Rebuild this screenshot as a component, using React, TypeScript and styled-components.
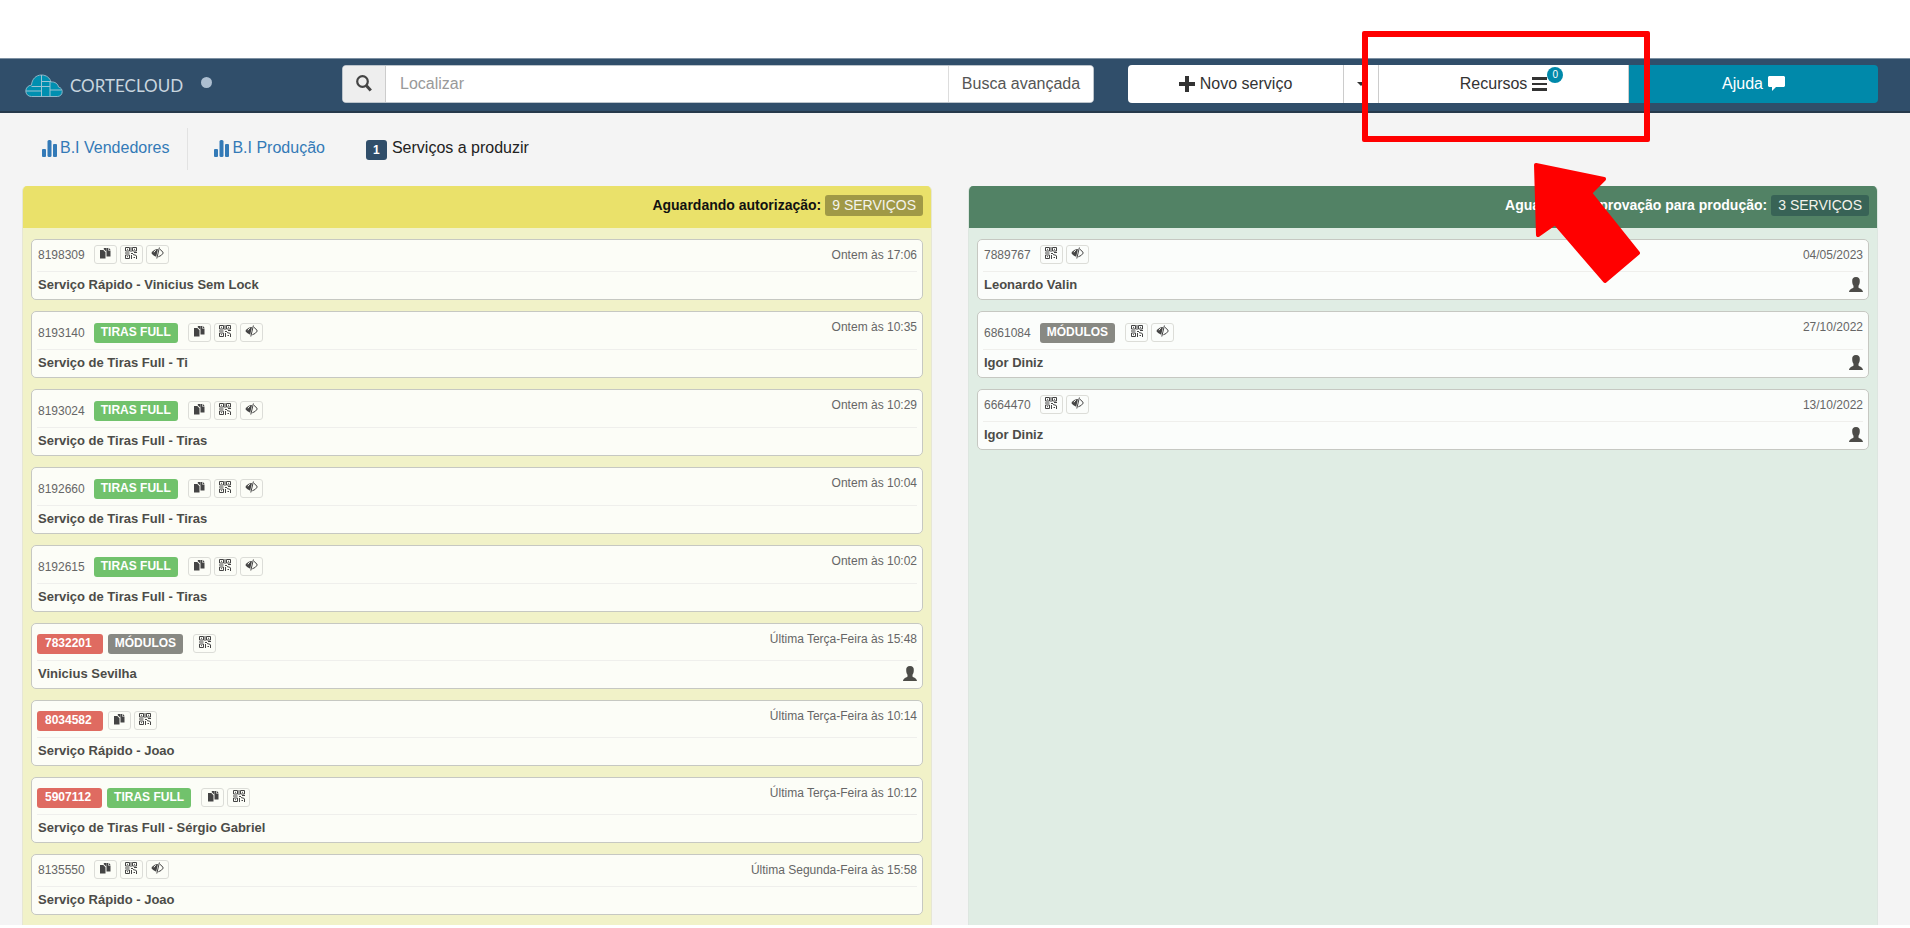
import React from "react";
import styled, { createGlobalStyle } from "styled-components";

const GlobalStyle = createGlobalStyle`
  * { box-sizing: border-box; }
  body { margin: 0; background: #fff; color: #333; font: 16px/22px "Liberation Sans", Arial, sans-serif; }
  button, input { font: inherit; }
  a { text-decoration: none; color: inherit; }
`;

const Page = styled.div`
  padding-top: 58px;
`;

const TopBar = styled.header`
  display: flex;
  align-items: center;
  height: 55px;
  padding: 0 32px 2px 25px;
  background: #304e6a;
  border-top: 1px solid #7d90a2;
  border-bottom: 2px solid #26394b;
`;

const Brand = styled.a`
  display: flex;
  align-items: center;
  gap: 7px;
  width: 317px;
  flex: none;
  padding-top: 3px;
  color: #c9d5df;
`;

const BrandName = styled.span`
  font: 17px/22px Lato, sans-serif;
`;

const StatusDot = styled.span`
  width: 11px;
  height: 11px;
  margin: 0 0 6px 11px;
  border-radius: 50%;
  background: #adbfd1;
`;

const Search = styled.form`
  display: flex;
  flex: 751 1 0;
  height: 38px;
  border: 1px solid #bcc4cb;
  border-radius: 4px;
  overflow: hidden;
  background: #fff;
`;

const SearchAddon = styled.label`
  display: flex;
  align-items: center;
  justify-content: center;
  width: 43px;
  padding-bottom: 2px;
  background: #eee;
  border-right: 1px solid #ccc;
  color: #444;
`;

const SearchInput = styled.input`
  flex: 1;
  min-width: 0;
  padding: 0 14px 1px;
  border: 0;
  outline: 0;
  color: #555;
  &::placeholder { color: #999; opacity: 1; }
`;

const SearchButton = styled.button`
  width: 145px;
  padding: 0 0 1px;
  border: 0;
  border-left: 1px solid #ddd;
  background: #fff;
  color: #555;
`;

const Actions = styled.div`
  display: flex;
  flex: 751 1 0;
  height: 38px;
  margin-left: 34px;
  border-radius: 4px;
  overflow: hidden;
`;

const ActionButton = styled.button<{ $grow?: number; $primary?: boolean }>`
  display: flex;
  align-items: center;
  justify-content: center;
  gap: 5px;
  flex: ${(p) => (p.$grow ? `${p.$grow} 1 0` : "0 0 35px")};
  min-width: 0;
  padding: 0 0 1px;
  border: 0;
  border-right: ${(p) => (p.$primary ? 0 : "1px solid #ccc")};
  background: ${(p) => (p.$primary ? "#0089aa" : "#fff")};
  color: ${(p) => (p.$primary ? "#fff" : "#333")};
`;

const Caret = styled.span`
  border: 4px solid transparent;
  border-top-color: #333;
  border-bottom: 0;
`;

const MenuIcon = styled.span`
  position: relative;
  display: flex;
`;

const Counter = styled.span`
  position: absolute;
  left: 15px;
  top: -9px;
  width: 16px;
  height: 16px;
  border-radius: 50%;
  background: #0089aa;
  color: #fff;
  font-size: 10px;
  line-height: 16px;
  text-align: center;
`;

const Main = styled.main`
  padding: 15px 32px 0 22px;
  background: #f4f4f4;
`;

const Tabs = styled.nav`
  display: flex;
  gap: 2px;
  height: 42px;
`;

const Tab = styled.a<{ $divided?: boolean; $active?: boolean }>`
  display: flex;
  align-items: center;
  gap: 3px;
  margin-right: ${(p) => (p.$divided ? 4 : 0)}px;
  padding: 0 18px 2px 20px;
  border-right: 1px solid ${(p) => (p.$divided ? "#e2e2e2" : "transparent")};
  color: ${(p) => (p.$active ? "#222" : "#337ab7")};
`;

const TabBadge = styled.span`
  width: 21px;
  height: 20px;
  margin: 4px 2px 0 0;
  border-radius: 3px;
  background: #304e6a;
  color: #fff;
  font: bold 12px/20px "Liberation Sans", Arial, sans-serif;
  text-align: center;
`;

const Board = styled.div`
  display: grid;
  grid-template-columns: 1fr 1fr;
  gap: 36px;
  margin-top: 16px;
`;

type Tone = "yellow" | "green";
const tones = {
  yellow: { head: "#eae16a", body: "#f1f2c8", text: "#111", badge: "#a09946", card: "#fcfdf7", edge: "#e6e6d4" },
  green: { head: "#528265", body: "#e0ede4", text: "#fff", badge: "#386356", card: "#fbfdfb", edge: "#dde6e0" },
};

const Panel = styled.section<{ $tone: Tone }>`
  border: 1px solid ${(p) => tones[p.$tone].edge};
  border-width: 0 1px;
  border-radius: 5px 5px 0 0;
  background: ${(p) => tones[p.$tone].body};
  overflow: hidden;
`;

const PanelHead = styled.h2<{ $tone: Tone }>`
  display: flex;
  align-items: center;
  justify-content: flex-end;
  gap: 4px;
  height: 42px;
  margin: 0;
  padding: 0 8px 4px;
  background: ${(p) => tones[p.$tone].head};
  color: ${(p) => tones[p.$tone].text};
  font-size: 14px;
  line-height: 20px;
`;

const CountBadge = styled.span<{ $tone: Tone }>`
  height: 21px;
  padding: 0 7px;
  border-radius: 3px;
  background: ${(p) => tones[p.$tone].badge};
  color: #f4f4ec;
  font-weight: normal;
  line-height: 21px;
`;

const CardList = styled.div`
  display: flex;
  flex-direction: column;
  gap: 11px;
  padding: 11px 8px 10px;
`;

const Card = styled.article<{ $tone: Tone }>`
  padding: 0 5px;
  border: 1px solid #c6c8c2;
  border-radius: 5px;
  background: ${(p) => tones[p.$tone].card};
  font-size: 12px;
  line-height: 18px;
  color: #666;
`;

const CardTop = styled.div<{ $height: number }>`
  display: flex;
  justify-content: space-between;
  height: ${(p) => p.$height}px;
  border-bottom: 1px solid #efefec;
`;

const CardMeta = styled.div`
  display: flex;
  align-self: flex-end;
  align-items: center;
  height: 32px;
`;

const ServiceId = styled.span`
  padding: 0 9px 0 1px;
`;

const Tag = styled.span<{ $color: string; $id?: boolean }>`
  height: 20px;
  margin-right: ${(p) => (p.$id ? 5 : 10)}px;
  padding: ${(p) => (p.$id ? "0 11px 0 8px" : "0 7px")};
  border-radius: 3px;
  background: ${(p) => p.$color};
  color: #fff;
  font-weight: bold;
  line-height: 18px;
`;

const IconGroup = styled.div`
  display: flex;
  gap: 3px;
  margin-bottom: 2px;
`;

const IconButton = styled.button`
  display: flex;
  align-items: center;
  justify-content: center;
  width: 23px;
  height: 19px;
  padding: 0 0 2px;
  border: 1px solid #dcddd8;
  border-radius: 3px;
  background: transparent;
  color: #444;
`;

const CardTime = styled.time`
  padding-top: 6px;
`;

const CardBody = styled.div`
  display: flex;
  align-items: center;
  justify-content: space-between;
  height: 27px;
  padding: 0 0 2px 1px;
  color: #4c4c48;
`;

const CardTitle = styled.strong`
  font-size: 13px;
`;

const Highlight = styled.div`
  position: absolute;
  top: 31px;
  left: 1362px;
  width: 288px;
  height: 111px;
  border: 6px solid #f00;
  border-radius: 2px;
`;

const Arrow = styled.svg`
  position: absolute;
  top: 160px;
  left: 1530px;
`;

const CopyIcon = () => (
  <svg width="12" height="12" viewBox="0 0 12 12" fill="currentColor" aria-hidden="true">
    <path d="M1 3h3.300L6.500 5.300V11.500H1zM4.800 1h2.400v3.400L4.800 2.300zM7.500 1h1.600v2.600h2.400V9.500H7.500z" />
    <path d="M9.700.8 11.600 3H9.700z" />
  </svg>
);

const QrIcon = () => (
  <svg width="12" height="12" viewBox="0 0 12 12" fill="none" stroke="currentColor" aria-hidden="true">
    <path d="M.5.500h4v3.500h-4zM7.500.500h4v3.500h-4zM.5 8h4v3.500h-4zM2 2.300h1M9 2.300h1M2 9.700h1M6 0v5M0 6h4.500M6 6.500h2M9 5.500h3M6.500 8v4M8 7.500l3.500 1M8.500 10.500h1.500M11.500 9v3" />
  </svg>
);

const EyeIcon = () => (
  <svg width="13" height="12" viewBox="0 0 13 12" aria-hidden="true">
    <path d="M.3 6Q3 2.200 7 2L5.200 9.800Q2.300 9 .3 6z" fill="currentColor" />
    <path d="M9 2.400Q11 3.500 12.300 6 10.500 9 7.300 9.800M8.400.5 5.800 11.500" fill="none" stroke="currentColor" />
    <path d="M3 5.300Q3.500 3.800 4.800 3.300" fill="none" stroke="#fcfdf7" />
  </svg>
);

const UserIcon = () => (
  <svg width="14" height="15" viewBox="0 0 14 15" fill="#4c4c48" aria-hidden="true">
    <path d="M7 0c2.800 0 4 1.800 3.800 4.200 0 2.300-.6 3.600-1.300 4.600v1.600c.8 1.200 4.200 1.300 4.500 4.600H0c.3-3.300 3.700-3.400 4.500-4.600V8.800C3.800 7.800 3.200 6.500 3.200 4.200 3 1.800 4.200 0 7 0z" />
  </svg>
);

const BarsIcon = () => (
  <svg width="15" height="17" viewBox="0 0 15 17" fill="currentColor" aria-hidden="true">
    <rect y="9" width="4" height="8" rx="1" />
    <rect x="5.500" width="4" height="17" rx="1.500" />
    <rect x="11" y="4" width="4" height="13" rx="1" />
  </svg>
);

const icons = {
  copy: { label: "Copiar", Icon: CopyIcon },
  qr: { label: "Etiquetas", Icon: QrIcon },
  eye: { label: "Visualizar", Icon: EyeIcon },
};

type Service = {
  id: string;
  late?: boolean;
  tag?: "TIRAS FULL" | "MÓDULOS";
  actions: (keyof typeof icons)[];
  time: string;
  title: string;
  user?: boolean;
};

const waiting: Service[] = [
  { id: "8198309", actions: ["copy", "qr", "eye"], time: "Ontem às 17:06", title: "Serviço Rápido - Vinicius Sem Lock" },
  { id: "8193140", tag: "TIRAS FULL", actions: ["copy", "qr", "eye"], time: "Ontem às 10:35", title: "Serviço de Tiras Full - Ti" },
  { id: "8193024", tag: "TIRAS FULL", actions: ["copy", "qr", "eye"], time: "Ontem às 10:29", title: "Serviço de Tiras Full - Tiras" },
  { id: "8192660", tag: "TIRAS FULL", actions: ["copy", "qr", "eye"], time: "Ontem às 10:04", title: "Serviço de Tiras Full - Tiras" },
  { id: "8192615", tag: "TIRAS FULL", actions: ["copy", "qr", "eye"], time: "Ontem às 10:02", title: "Serviço de Tiras Full - Tiras" },
  { id: "7832201", late: true, tag: "MÓDULOS", actions: ["qr"], time: "Última Terça-Feira às 15:48", title: "Vinicius Sevilha", user: true },
  { id: "8034582", late: true, actions: ["copy", "qr"], time: "Última Terça-Feira às 10:14", title: "Serviço Rápido - Joao" },
  { id: "5907112", late: true, tag: "TIRAS FULL", actions: ["copy", "qr"], time: "Última Terça-Feira às 10:12", title: "Serviço de Tiras Full - Sérgio Gabriel" },
  { id: "8135550", actions: ["copy", "qr", "eye"], time: "Última Segunda-Feira às 15:58", title: "Serviço Rápido - Joao" },
];

const approval: Service[] = [
  { id: "7889767", actions: ["qr", "eye"], time: "04/05/2023", title: "Leonardo Valin", user: true },
  { id: "6861084", tag: "MÓDULOS", actions: ["qr", "eye"], time: "27/10/2022", title: "Igor Diniz", user: true },
  { id: "6664470", actions: ["qr", "eye"], time: "13/10/2022", title: "Igor Diniz", user: true },
];

const ServiceCard = ({ service: s, tone }: { service: Service; tone: Tone }) => (
  <Card $tone={tone}>
    <CardTop $height={s.late ? 37 : s.tag ? 38 : 32}>
      <CardMeta>
        {s.late ? <Tag $color="#df6b61" $id>{s.id}</Tag> : <ServiceId>{s.id}</ServiceId>}
        {s.tag && <Tag $color={s.tag === "MÓDULOS" ? "#888983" : "#71c26c"}>{s.tag}</Tag>}
        <IconGroup>
          {s.actions.map((a) => {
            const { label, Icon } = icons[a];
            return <IconButton key={a} type="button" aria-label={label}><Icon /></IconButton>;
          })}
        </IconGroup>
      </CardMeta>
      <CardTime>{s.time}</CardTime>
    </CardTop>
    <CardBody>
      <CardTitle>{s.title}</CardTitle>
      {s.user && <UserIcon />}
    </CardBody>
  </Card>
);

const ServicePanel = ({ tone, title, services }: { tone: Tone; title: string; services: Service[] }) => (
  <Panel $tone={tone}>
    <PanelHead $tone={tone}>
      {title}
      <CountBadge $tone={tone}>{services.length} SERVIÇOS</CountBadge>
    </PanelHead>
    <CardList>
      {services.map((s) => <ServiceCard key={s.id} service={s} tone={tone} />)}
    </CardList>
  </Panel>
);

export default function App() {
  return (
    <Page>
      <GlobalStyle />
      <TopBar>
        <Brand href="#">
          <svg width="38" height="24" viewBox="0 0 38 24" aria-hidden="true">
            <path d="M6.500 22.500C3 22.500.8 20 .8 17S3 11.500 6.500 11C7 5 11 1 16.500 1c5 0 8.500 3 9.500 7 4-.5 7 2 7.500 5 2.500.5 3.700 2.500 3.700 4.700 0 2.800-2 4.800-5 4.800z" fill="#008fb0" stroke="#8fb6c8" />
            <path d="M16.500 1v11.500M16.500 12.500v10M25 8v14M6.500 12.500H25M1 17h15.500M17 7.500h9M25 16h11.500" fill="none" stroke="#9cc3d2" />
          </svg>
          <BrandName>CORTECLOUD</BrandName>
          <StatusDot />
        </Brand>
        <Search onSubmit={(e) => e.preventDefault()}>
          <SearchAddon htmlFor="search" aria-label="Localizar">
            <svg width="16" height="17" viewBox="0 0 16 17" fill="none" stroke="currentColor" aria-hidden="true">
              <circle cx="6.500" cy="6.500" r="5.300" strokeWidth="2.200" />
              <path d="m10.500 10.800 4.300 4.700" strokeWidth="3" />
            </svg>
          </SearchAddon>
          <SearchInput id="search" placeholder="Localizar" />
          <SearchButton type="submit">Busca avançada</SearchButton>
        </Search>
        <Actions>
          <ActionButton type="button" $grow={216}>
            <svg width="16" height="16" viewBox="0 0 16 16" fill="currentColor" aria-hidden="true">
              <path d="M6 0h4v6h6v4h-6v6H6v-6H0V6h6z" />
            </svg>
            Novo serviço
          </ActionButton>
          <ActionButton type="button" aria-label="Mais opções"><Caret /></ActionButton>
          <ActionButton type="button" $grow={250}>
            Recursos
            <MenuIcon>
              <svg width="15" height="16" viewBox="0 0 15 16" fill="currentColor" aria-hidden="true">
                <path d="M0 1h15v3H0zM0 7h15v2H0zM0 12h15v3H0z" />
              </svg>
              <Counter>0</Counter>
            </MenuIcon>
          </ActionButton>
          <ActionButton type="button" $grow={250} $primary>
            Ajuda
            <svg width="17" height="15" viewBox="0 0 17 15" fill="currentColor" aria-hidden="true">
              <path d="M1 0h15l1 1v9l-1 1H8l-4 4v-4H1l-1-1V1z" />
            </svg>
          </ActionButton>
        </Actions>
      </TopBar>
      <Main>
        <Tabs>
          <Tab href="#" $divided><BarsIcon />B.I Vendedores</Tab>
          <Tab href="#"><BarsIcon />B.I Produção</Tab>
          <Tab href="#" $active><TabBadge>1</TabBadge>Serviços a produzir</Tab>
        </Tabs>
        <Board>
          <ServicePanel tone="yellow" title="Aguardando autorização:" services={waiting} />
          <ServicePanel tone="green" title="Aguardando aprovação para produção:" services={approval} />
        </Board>
      </Main>
      <Highlight />
      <Arrow width="114" height="128" viewBox="0 0 114 128" aria-hidden="true">
        <path d="M6 5 74 19 60 33 108 93 75 121 25 63 8 75z" fill="#f00" stroke="#f00" strokeWidth="4" strokeLinejoin="round" />
      </Arrow>
    </Page>
  );
}
